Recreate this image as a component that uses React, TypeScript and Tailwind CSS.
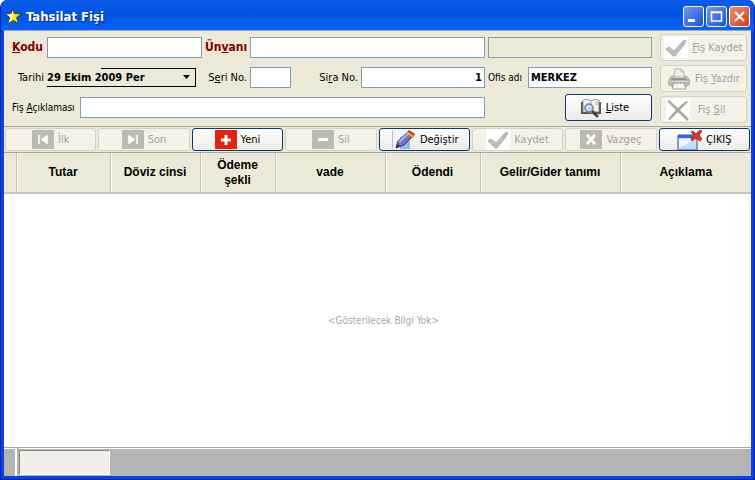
import type { ReactNode } from "react";

const INPUT = "h-[21px] min-w-0 border border-[#7f9db9] px-0.5 text-[11px] outline-none";
const BUTTON = "flex min-w-0 items-center justify-center rounded-[3px] border whitespace-nowrap";
const ACTIVE = "border-[#003c74] bg-linear-to-b from-white to-[#ecebe6] text-black";
const DISABLED = "border-[#d6d2c2] bg-[#f4f2e8] text-[#a5a393]";

const columns = [
  { title: "Tutar", width: "w-[94px]" },
  { title: "Döviz cinsi", width: "w-[90px]" },
  { title: "Ödeme şekli", width: "w-[75px]" },
  { title: "vade", width: "w-[110px]" },
  { title: "Ödendi", width: "w-[95px]" },
  { title: "Gelir/Gider tanımı", width: "w-[140px]" },
  { title: "Açıklama", width: "" },
];

function StarIcon() {
  return (
    <svg width="17" height="17" viewBox="0 0 17 17">
      <path d="M7.500 1l2 4.500 7 .5-5 3.500 2 6-5-3-6 3.500 2.500-6L.5 6l6-.8z" fill="#ffe800" stroke="#26334d" strokeWidth=".8" />
      <path d="M7.500 2.500l.8 7L3.500 14l2-4.500L2 6.500h4.500z" fill="#f4f4e0" />
    </svg>
  );
}

function CheckIcon() {
  return (
    <svg width="24" height="21" viewBox="0 0 24 21">
      <path fill="#fff" d="M0 0h24v21H0z" />
      <path d="M2 12l3-2 5 4L19 4l3-1-2 5-9 11H9z" fill="#bfbeb5" stroke="#a9a89e" strokeWidth=".8" />
    </svg>
  );
}

function PrinterIcon() {
  return (
    <svg width="24" height="24" viewBox="0 0 24 24">
      <path d="M7 10L8 2h6l3 3v5z" fill="#f0efe8" stroke="#b8b6ab" />
      <path d="M14 2v3h3" fill="none" stroke="#b8b6ab" />
      <path d="M1 13l3-4 3-1v3h10V8l3 1 3 4v5l-4 2H5l-4-2z" fill="#bbb9ae" />
      <path d="M6 11h12l2 2H4z" fill="#96948a" />
      <path d="M2 14h20v1H2z" fill="#d9d7cd" />
      <path d="M7 16h10l2 6H5z" fill="#f3f2ec" stroke="#a4a297" />
    </svg>
  );
}

function CrossIcon() {
  return (
    <svg width="24" height="22" viewBox="0 0 24 22">
      <path fill="#fff" d="M0 0h24v22H0z" />
      <path d="M1 2l2-1 9 8 8-7 2 1-8 8 9 9-2 2-9-9-8 8-2-1 8-9z" fill="#aaa99f" />
    </svg>
  );
}

function BookIcon() {
  return (
    <svg width="22" height="20" viewBox="0 0 22 20">
      <path d="M1 4h2v10h16V4h2v12H1z" fill="#5d5149" />
      <path d="M3 2q4-2 8 1 4-3 8-1v12q-4-1-8 1-4-2-8-1z" fill="#f3f1ee" stroke="#8b8681" strokeWidth=".8" />
      <path d="M11 3v4M15 4h3M15 6h3" stroke="#b9b3ad" />
      <path d="M12 13l5 5" stroke="#454545" strokeWidth="3" strokeLinecap="round" />
      <circle cx="9" cy="10" r="4" fill="#b4d9fb" stroke="#6c8099" strokeWidth="1.500" />
      <path d="M7 10q0-2 2-2" fill="none" stroke="#fff" />
    </svg>
  );
}

function Tile({ color, children }: { color: string; children: ReactNode }) {
  return (
    <svg width="22" height="19" viewBox="0 0 22 19">
      <path fill={color} d="M0 0h22v19H0z" />
      {children}
    </svg>
  );
}

function PencilIcon() {
  return (
    <svg width="26" height="20" viewBox="0 0 26 20">
      <path d="M2 0h18v19H2z" fill="#f2f6fc" />
      <path d="M10 7h10v12H10z" fill="#8fb8ec" />
      <path d="M2.500 0v19" stroke="#a9c3e4" />
      <path d="M6 18l2-7L18 2l5 4-9 9z" fill="#7271c7" stroke="#38376e" />
      <path d="M9 12l10-9" stroke="#b3b3ee" strokeWidth="2" />
      <path d="M16 3l3-3 6 4-2 4z" fill="#cf2a1c" />
      <path d="M16 3l1.500-1.500 6.500 4.500-1 2z" fill="#f2b134" />
      <path d="M6 18l1-4 3 2z" fill="#282850" />
    </svg>
  );
}

function ExitIcon() {
  return (
    <svg width="25" height="20" viewBox="0 0 25 20">
      <path d="M1 5h19v15H1z" fill="#c3dcfa" stroke="#34548c" />
      <path d="M1 5h19v3H1z" fill="#3568c8" />
      <path d="M2 9h17L2 18z" fill="#f1f7ff" />
      <path d="M14 2l2-1 3 3 4-4 2 1-3 4 3 4-2 2-4-3-4 3-1-2 3-4z" fill="#e43322" stroke="#8f1d16" strokeWidth=".8" />
    </svg>
  );
}

const toolbar = [
  { label: "İlk", enabled: false, icon: <Tile color="#bcbbb1"><path d="M7 5v9M15 6l-5 3.500 5 3.500z" fill="#fff" stroke="#fff" strokeWidth="1.500" /></Tile> },
  { label: "Son", enabled: false, icon: <Tile color="#bcbbb1"><path d="M15 5v9M7 6l5 3.500L7 13z" fill="#fff" stroke="#fff" strokeWidth="1.500" /></Tile> },
  { label: "Yeni", enabled: true, icon: <Tile color="#e0240d"><path d="M11 5v10M6 10h10" stroke="#fff" strokeWidth="3" /></Tile> },
  { label: "Sil", enabled: false, icon: <Tile color="#bcbbb1"><path d="M6 9.500h10" stroke="#fff" strokeWidth="3" /></Tile> },
  { label: "Değiştir", enabled: true, icon: <PencilIcon /> },
  { label: "Kaydet", enabled: false, icon: <CheckIcon /> },
  { label: "Vazgeç", enabled: false, icon: <Tile color="#bcbbb1"><path d="M7 5l8 9M15 5l-8 9" stroke="#fff" strokeWidth="3" /></Tile> },
  { label: "ÇIKIŞ", enabled: true, icon: <ExitIcon /> },
];

function TitleBar() {
  const button = "flex size-[21px] items-center justify-center rounded-[3px] border border-white";
  return (
    <header className="flex h-[30px] shrink-0 items-center gap-1 rounded-t-md bg-linear-to-b from-[#0a5be8] via-[#0054e3] to-[#0562fc] px-1 pt-0.5 text-white">
      <StarIcon />
      <h1 className="flex-1 text-[13px] font-bold [text-shadow:1px_1px_1px_#0a2a80]">Tahsilat Fişi</h1>
      <div className="flex gap-0.5">
        <button aria-label="Simge durumuna küçült" className={`${button} bg-linear-to-br from-[#6f96ef] to-[#1d4fd8]`}>
          <svg width="19" height="19"><path d="M4 12h7v3H4z" fill="#fff" /></svg>
        </button>
        <button aria-label="Ekranı kapla" className={`${button} bg-linear-to-br from-[#6f96ef] to-[#1d4fd8]`}>
          <svg width="19" height="19"><path d="M4.500 5h10v9h-10zM4 5.500h11" fill="none" stroke="#fff" strokeWidth="1.500" /></svg>
        </button>
        <button aria-label="Kapat" className={`${button} bg-linear-to-br from-[#f08c70] to-[#d33a12]`}>
          <svg width="19" height="19"><path d="M5 5l9 9M14 5l-9 9" stroke="#fff" strokeWidth="2" /></svg>
        </button>
      </div>
    </header>
  );
}

function VoucherForm() {
  return (
    <form className="flex gap-2 border-b border-[#aca899] px-1 pt-[3px] pb-[3px] whitespace-nowrap">
      <div className="flex min-w-0 flex-1 flex-col gap-[9px] pt-[3px] pl-1">
        <div className="flex items-center gap-[3px]">
          <label htmlFor="kodu" className="w-8 text-[12px] font-bold text-[#800000]"><u>K</u>odu</label>
          <input id="kodu" className={`${INPUT} w-[155px] bg-white`} />
          <label htmlFor="unvan" className="w-[42px] text-[12px] font-bold text-[#800000]">Ün<u>v</u>anı</label>
          <input id="unvan" className={`${INPUT} flex-1 bg-white`} />
          <input aria-label="Ünvan devamı" disabled className={`${INPUT} w-[164px] bg-[#ece9d8]`} />
        </div>
        <div className="flex items-center gap-[3px]">
          <label htmlFor="tarih" className="w-8 text-right">Tarihi</label>
          <div className="relative w-[149px]">
            <select
              id="tarih"
              className="block h-[19px] w-full appearance-none border-r border-b border-black bg-[linear-gradient(#000,#000)] bg-[length:94px_1px] bg-right-top bg-no-repeat font-bold outline-none"
            >
              <option>29 Ekim 2009 Per</option>
            </select>
            <svg className="pointer-events-none absolute top-[7px] right-1.5" width="7" height="4"><path d="M0 0h7L3.500 4z" /></svg>
          </div>
          <label htmlFor="seri" className="w-12 text-right">S<u>e</u>ri No.</label>
          <input id="seri" className={`${INPUT} w-[41px] bg-white`} />
          <label htmlFor="sira" className="w-16 text-right">Si<u>r</u>a No.</label>
          <input id="sira" defaultValue="1" className={`${INPUT} flex-1 bg-white text-right font-bold`} />
          <label htmlFor="ofis" className="w-[37px] text-[10px]">Ofis adı</label>
          <input id="ofis" defaultValue="MERKEZ" className={`${INPUT} w-[124px] bg-white font-bold`} />
        </div>
        <div className="flex h-[21px] items-center gap-[3px]">
          <label htmlFor="aciklama" className="w-[65px] text-[10px]">Fiş <u>A</u>çıklaması</label>
          <input id="aciklama" className={`${INPUT} flex-1 bg-white`} />
          <div className="flex w-[164px] justify-end">
            <button type="button" className={`${BUTTON} ${ACTIVE} h-[27px] w-[87px] gap-1 pr-2`}>
              <BookIcon /><span><u>L</u>iste</span>
            </button>
          </div>
        </div>
      </div>
      <div className="flex w-[87px] flex-col gap-1">
        <button type="button" disabled className={`${BUTTON} ${DISABLED} h-[27px] gap-1`}><CheckIcon /><span><u>F</u>iş Kaydet</span></button>
        <button type="button" disabled className={`${BUTTON} ${DISABLED} h-[27px] gap-1`}><PrinterIcon /><span>Fiş <u>Y</u>azdır</span></button>
        <button type="button" disabled className={`${BUTTON} ${DISABLED} h-[27px] gap-2 pr-4`}><CrossIcon /><span>Fiş <u>S</u>il</span></button>
      </div>
    </form>
  );
}

export default function App() {
  return (
    <div className="flex h-screen flex-col rounded-t-lg border-x border-b border-[#0020b0] bg-[#0845dd] font-['DejaVu_Sans_Condensed','DejaVu_Sans',sans-serif] text-[11px] leading-[13px]">
      <TitleBar />
      <main className="mx-[3px] mb-[3px] flex min-h-0 flex-1 flex-col border-t border-[#aca899] bg-[#ece9d8]">
        <VoucherForm />
        <nav className="grid h-[26px] shrink-0 grid-cols-8 gap-0.5 border-b border-[#aca899] px-px py-px">
          {toolbar.map(({ label, enabled, icon }) => (
            <button key={label} disabled={!enabled} className={`${BUTTON} gap-1 ${enabled ? ACTIVE : DISABLED}`}>
              {icon}
              <span>{label}</span>
            </button>
          ))}
        </nav>
        <div className="min-h-0 flex-1 bg-white">
          <table className="h-full w-full table-fixed border-collapse">
            <thead className="h-10 bg-[#ece9d8] font-['Liberation_Sans',Arial,sans-serif] text-[12px] leading-[15px]">
              <tr className="border-b-2 border-[#cbc7b8]">
                <th aria-label="Satır" className="w-3" />
                {columns.map((c) => (
                  <th key={c.title} className={`${c.width} border-l border-[#c5c2b2] px-3 font-bold shadow-[inset_1px_0_#fff]`}>{c.title}</th>
                ))}
              </tr>
            </thead>
            <tbody>
              <tr>
                <td colSpan={8} className="pl-3 text-center text-[10px] text-[#aca899]">&lt;Gösterilecek Bilgi Yok&gt;</td>
              </tr>
            </tbody>
          </table>
        </div>
        <footer className="flex h-[29px] shrink-0 gap-0.5 border-t border-[#aca899] bg-[#b4b4b4]">
          <div className="w-[13px] border-t border-r-2 border-white" />
          <div className="flex-1 border-t border-white pt-px">
            <div className="h-[25px] w-[91px] border border-t-[#8c8c8c] border-r-white border-b-white border-l-[#8c8c8c] bg-[#f1efe8]" />
          </div>
        </footer>
      </main>
    </div>
  );
}
